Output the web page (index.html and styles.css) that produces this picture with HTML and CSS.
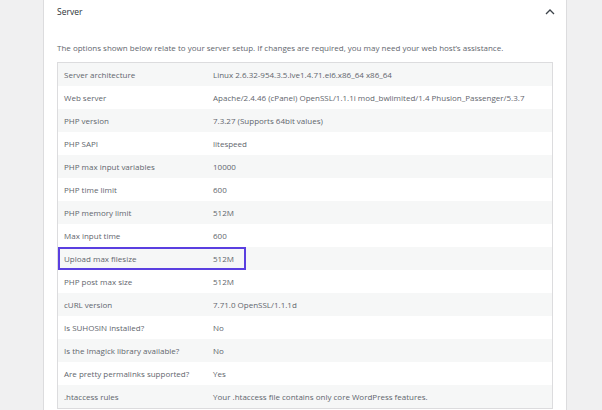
FILE: index.html
```html
<!DOCTYPE html>
<html>
<head>
<meta charset="utf-8">
<link rel="stylesheet" href="styles.css">
</head>
<body>
<div class="panel">
  <div class="panel-header">
    <span class="title">Server</span>
    <svg class="chevron" width="10" height="7" viewBox="0 0 10 7"><path d="M1 6 L5 2 L9 6" fill="none" stroke="#3c434a" stroke-width="1.3"/></svg>
  </div>
  <p class="desc">The options shown below relate to your server setup. If changes are required, you may need your web host’s assistance.</p>
  <div class="table">
    <div class="row"><span class="label">Server architecture</span><span class="value">Linux 2.6.32-954.3.5.lve1.4.71.el6.x86_64 x86_64</span></div>
    <div class="row"><span class="label">Web server</span><span class="value">Apache/2.4.46 (cPanel) OpenSSL/1.1.1i mod_bwlimited/1.4 Phusion_Passenger/5.3.7</span></div>
    <div class="row"><span class="label">PHP version</span><span class="value">7.3.27 (Supports 64bit values)</span></div>
    <div class="row"><span class="label">PHP SAPI</span><span class="value">litespeed</span></div>
    <div class="row"><span class="label">PHP max input variables</span><span class="value">10000</span></div>
    <div class="row"><span class="label">PHP time limit</span><span class="value">600</span></div>
    <div class="row"><span class="label">PHP memory limit</span><span class="value">512M</span></div>
    <div class="row"><span class="label">Max input time</span><span class="value">600</span></div>
    <div class="row highlight"><span class="label">Upload max filesize</span><span class="value">512M</span></div>
    <div class="row"><span class="label">PHP post max size</span><span class="value">512M</span></div>
    <div class="row"><span class="label">cURL version</span><span class="value">7.71.0 OpenSSL/1.1.1d</span></div>
    <div class="row"><span class="label">Is SUHOSIN installed?</span><span class="value">No</span></div>
    <div class="row"><span class="label">Is the Imagick library available?</span><span class="value">No</span></div>
    <div class="row"><span class="label">Are pretty permalinks supported?</span><span class="value">Yes</span></div>
    <div class="row"><span class="label">.htaccess rules</span><span class="value">Your .htaccess file contains only core WordPress features.</span></div>
  </div>
</div>
</body>
</html>
```
FILE: styles.css
```css
html, body {
  margin: 0;
  padding: 0;
  height: 100%;
  overflow: hidden;
}
body {
  background: #f0f0f1;
  font-family: "Open Sans", "Liberation Sans", sans-serif;
  font-size: 8px;
  color: #5f666d;
  padding-left: 43px;
}
.panel {
  width: 522px;
  height: 410px;
  background: #fff;
  border-left: 1px solid #dcdcde;
  border-right: 1px solid #dcdcde;
  box-sizing: content-box;
}
.panel-header {
  height: 22px;
  display: flex;
  align-items: center;
  justify-content: space-between;
  padding: 0 11px 0 13px;
}
.title {
  color: #2c3338;
  font-size: 8.5px;
}
.chevron {
  display: block;
}
.desc {
  margin: 0;
  padding: 19px 13px 8px;
  line-height: 13px;
}
.table {
  margin: 0 13px;
  border: 1px solid #dcdcde;
}
.row {
  display: flex;
  height: 23px;
  align-items: center;
  padding-left: 6px;
}
.row:nth-child(odd) {
  background: #f6f7f7;
}
.label {
  width: 149px;
  flex: none;
}
.highlight {
  position: relative;
}
.highlight::after {
  content: "";
  position: absolute;
  left: 0;
  top: 0;
  width: 184px;
  height: 19px;
  border: 2px solid #5a3fe0;
}
```
